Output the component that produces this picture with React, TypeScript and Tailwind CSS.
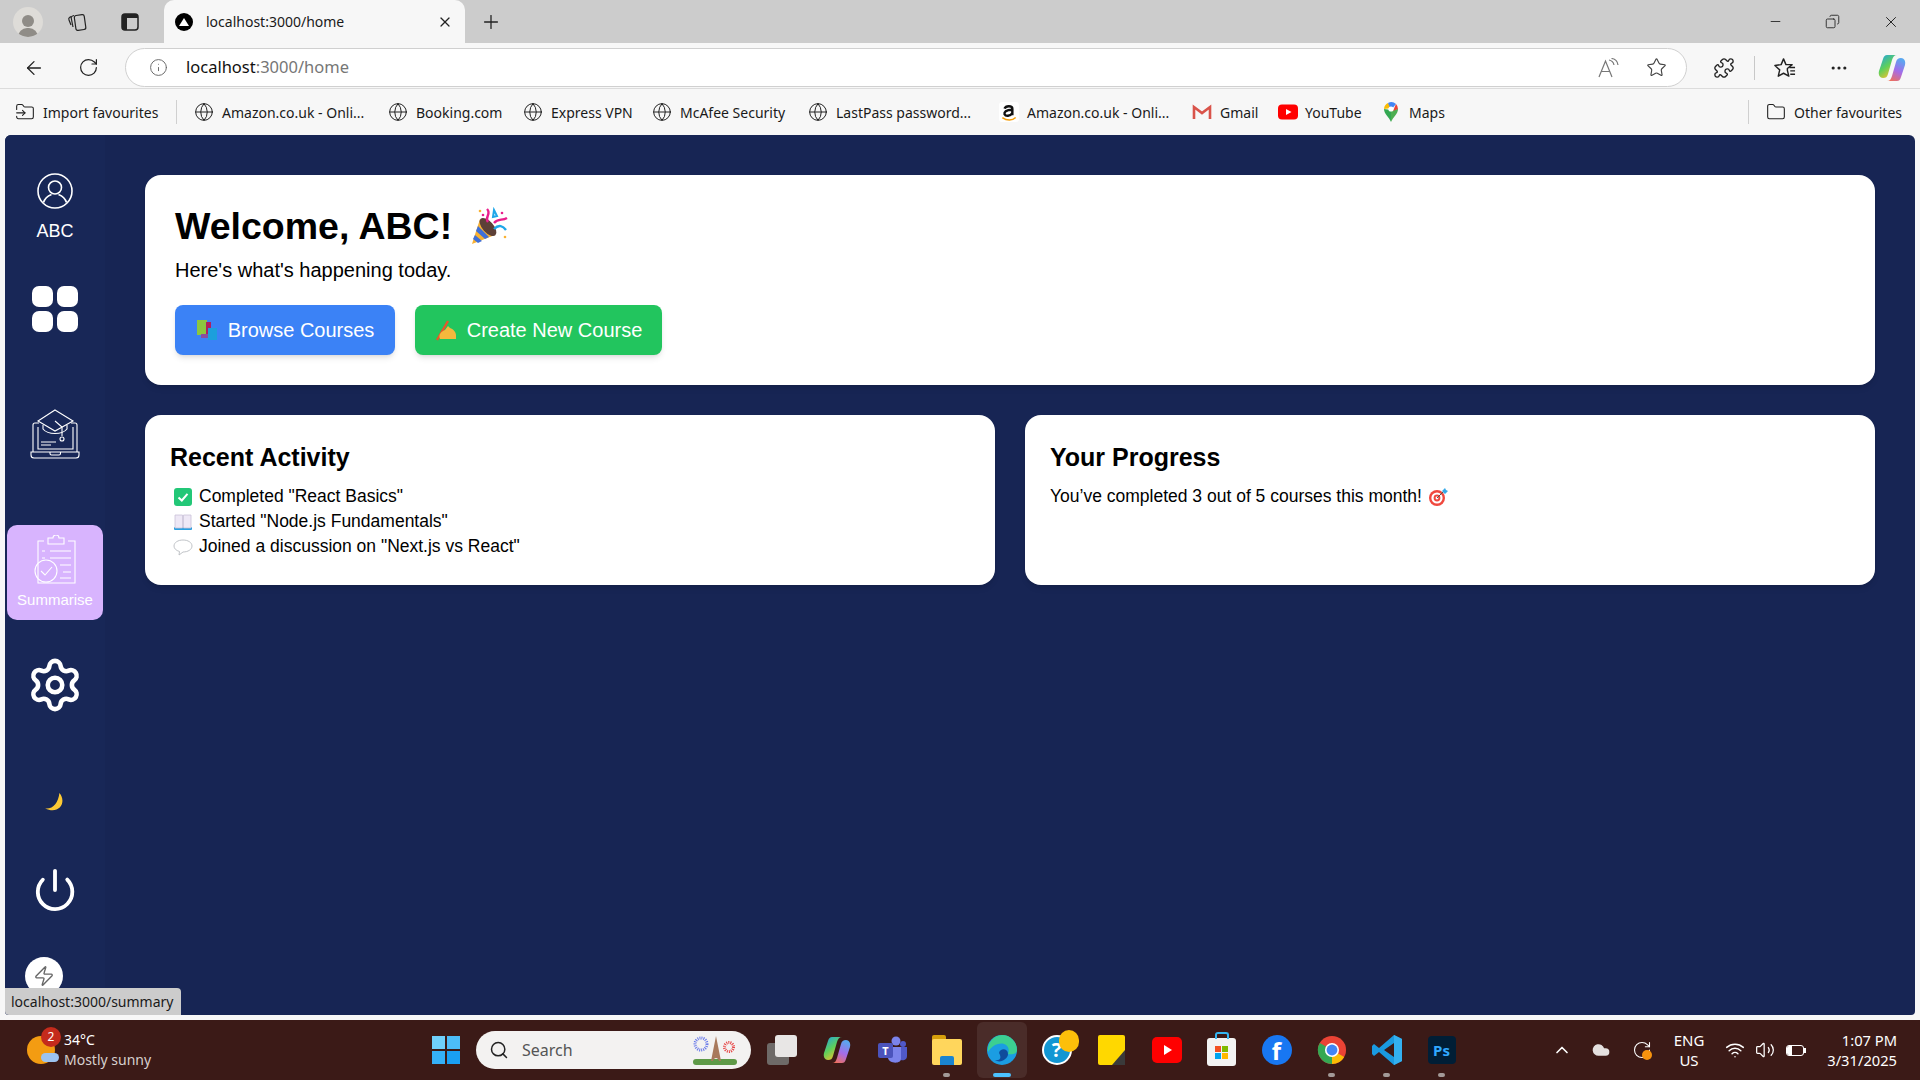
import {
  ArrowLeft,
  ChevronUp,
  Cloud,
  Copy,
  Ellipsis,
  Folder,
  FolderInput,
  Globe,
  Info,
  Minus,
  Plus,
  Power,
  Puzzle,
  RotateCw,
  Search,
  Settings,
  Star,
  Volume2,
  Wifi,
  X,
  Zap,
} from "lucide-react";

const UI_FONT = "font-['Noto_Sans','Open_Sans',sans-serif]";
const PAGE_FONT = "font-['Liberation_Sans',Arial,sans-serif]";

function PartyPopper() {
  return (
    <svg viewBox="0 0 40 40" className="w-[40px] h-[40px]">
      <path d="M3 38 L11 13 L26 29 Z" fill="#f9b233" />
      <path d="M6 29 L13 35 L9 37 L4 33 Z M9 20 L20 31 L16 33 L7 25 Z" fill="#3f6fd8" />
      <ellipse cx="19" cy="21" rx="5.5" ry="11" transform="rotate(-42 19 21)" fill="#5d4037" />
      <path d="M18 3 C23 8 15 11 19 16" stroke="#e91e8c" strokeWidth="2.4" fill="none" />
      <path d="M25 4 l3 6 -4 1 z" stroke="#1ea7e9" strokeWidth="2" fill="none" />
      <path d="M25 17 C29 12 33 15 38 12" stroke="#e91e8c" strokeWidth="2.4" fill="none" />
      <path d="M25 23 C30 18 34 20 37 24" stroke="#1ea7e9" strokeWidth="2.4" fill="none" />
      <circle cx="11" cy="5" r="1.3" fill="#f9b233" />
      <circle cx="14" cy="9" r="1.3" fill="#e91e8c" />
      <circle cx="33" cy="7" r="1.3" fill="#e91e8c" />
      <circle cx="36" cy="31" r="1.3" fill="#f9b233" />
    </svg>
  );
}

function Books() {
  return (
    <svg viewBox="0 0 22 22" className="w-[22px] h-[22px]">
      <rect x="1" y="1" width="10" height="15" fill="#8cc63f" />
      <rect x="10" y="3" width="5" height="14" fill="#b01f5e" />
      <rect x="5" y="15" width="9" height="4" fill="#8a4d9e" />
      <rect x="12" y="9" width="9" height="12" fill="#1c9fdc" />
    </svg>
  );
}

function WritingHand() {
  return (
    <svg viewBox="0 0 22 22" className="w-[22px] h-[22px]">
      <path d="M2 21 L13 2" stroke="#e8562a" strokeWidth="2.4" />
      <path d="M5 20 C3 15 7 12 10 11 L13 7 L15 9 C18 10 21 13 21 16 V20 Z" fill="#f5b83d" />
    </svg>
  );
}

function CheckEmoji() {
  return (
    <svg viewBox="0 0 20 20" className="w-[20px] h-[20px]">
      <rect x="1" y="1" width="18" height="18" rx="3" fill="#22c777" />
      <path d="M5.5 10.5 L8.8 13.5 L14.5 6.8" stroke="#fff" strokeWidth="2" fill="none" />
    </svg>
  );
}

function BookEmoji() {
  return (
    <svg viewBox="0 0 20 20" className="w-[20px] h-[20px]">
      <rect x="1" y="15" width="18" height="3" rx="1" fill="#2a9fe0" />
      <path d="M2 3 H9.5 V16 H2 Z M10.5 3 H18 V16 H10.5 Z" fill="#eee8f6" stroke="#c9c2d8" strokeWidth="0.8" />
    </svg>
  );
}

function BubbleEmoji() {
  return (
    <svg viewBox="0 0 20 20" className="w-[20px] h-[20px]">
      <path d="M10 3 C15 3 19 5.5 19 9 C19 12.5 15 15 10 15 L6 18 L6.5 14.5 C3 13.5 1 11.5 1 9 C1 5.5 5 3 10 3 Z" fill="#fff" stroke="#b9bcc1" strokeWidth="0.9" />
    </svg>
  );
}

function TargetEmoji() {
  return (
    <svg viewBox="0 0 20 20" className="w-[20px] h-[20px]">
      <circle cx="9" cy="11" r="8" fill="#f0483e" />
      <circle cx="9" cy="11" r="5.6" fill="#fff" />
      <circle cx="9" cy="11" r="3.4" fill="#f0483e" />
      <circle cx="9" cy="11" r="1.4" fill="#fff" />
      <path d="M9 11 L16 4" stroke="#555" strokeWidth="1" />
      <path d="M14 4 L17 1 L18 3 L20 4 L17 7 Z" fill="#35a9e8" />
    </svg>
  );
}

function GridIcon() {
  return (
    <div className="grid grid-cols-2 gap-[4px] w-[46px] h-[46px]">
      <div className="bg-white rounded-[7px]" />
      <div className="bg-white rounded-[7px]" />
      <div className="bg-white rounded-[7px]" />
      <div className="bg-white rounded-[7px]" />
    </div>
  );
}

function UserCircle() {
  return (
    <svg viewBox="0 0 36 36" className="w-[36px] h-[36px]" fill="none" stroke="#fff" strokeWidth="1.6">
      <circle cx="18" cy="18" r="17" />
      <circle cx="18" cy="14.5" r="6.5" />
      <path d="M6.5 29.5 C8 24.5 12 22.5 14.5 21.5 M29.5 29.5 C28 24.5 24 22.5 21.5 21.5" />
    </svg>
  );
}

function LaptopCap() {
  return (
    <svg viewBox="0 0 50 50" className="w-[50px] h-[50px]" fill="none" stroke="#fff" strokeWidth="1.1">
      <path d="M9 14 H5 a2 2 0 0 0 -2 2 V43 M41 14 H45 a2 2 0 0 1 2 2 V43" />
      <path d="M8 18 V40 H43 V18" />
      <path d="M1 43 H49 V46 a3 3 0 0 1 -3 3 H4 a3 3 0 0 1 -3 -3 Z M20 43 v1.5 a1.5 1.5 0 0 0 1.5 1.5 H29 a1.5 1.5 0 0 0 1.5 -1.5 V43" />
      <path d="M25 1 L43 12 L25 22 L8 12 Z" />
      <path d="M13 16 V20 C18 26 32 26 37 20 V16" />
      <path d="M25 12 L32 18 V27" />
      <circle cx="32" cy="30" r="2" />
      <path d="M11 33 H26 M11 36 H21" />
    </svg>
  );
}

function ClipboardCheck() {
  return (
    <svg viewBox="0 0 46 50" className="w-[46px] h-[50px]" fill="none" stroke="#fff" strokeWidth="1.1">
      <path d="M12 6 H6 V48 H43 V6 H36" />
      <path d="M16 6 V3 H21 a3 3 0 0 1 6 0 H32 V9 H16 Z" />
      <path d="M10 16 H13 M18 16 H39 M10 23 H13 M18 23 H39 M28 30 H39 M31 37 H39 M28 43 H39" />
      <circle cx="14" cy="36" r="11" />
      <path d="M9 36 L13 40 L20 32" />
    </svg>
  );
}

function Moon() {
  return (
    <svg viewBox="0 0 20 20" className="w-[22px] h-[22px]">
      <path d="M14 1 C21 9 14 21 1 15 C8 16 13 10 14 1 Z" fill="#fcc934" />
    </svg>
  );
}

function Sidebar() {
  return (
    <aside className="w-[100px] shrink-0 flex flex-col items-center pt-[38px] bg-[#182757]">
      <UserCircle />
      <span className="mt-[12px] text-[18px] leading-[21px] text-white">ABC</span>
      <div className="mt-[44px]">
        <GridIcon />
      </div>
      <div className="mt-[77px]">
        <LaptopCap />
      </div>
      <div className="mt-[66px] w-[96px] h-[95px] rounded-[10px] bg-[#d8b4fe] flex flex-col items-center pt-[10px]">
        <ClipboardCheck />
        <span className="mt-[6px] text-[15px] leading-[18px] text-white">Summarise</span>
      </div>
      <Settings size={58} strokeWidth={1.9} className="mt-[36px] text-white" />
      <div className="mt-[78px]">
        <Moon />
      </div>
      <Power size={46} strokeWidth={2} className="mt-[53px] text-white" />
    </aside>
  );
}

function Card({ title, children }: { title: string; children: React.ReactNode }) {
  return (
    <section className="h-[170px] bg-white rounded-2xl pt-[27px] px-[25px] shadow-md">
      <h2 className="text-[25px] leading-[30px] font-bold text-black">{title}</h2>
      <div className="mt-[12px]">{children}</div>
    </section>
  );
}

function ActivityRow({ icon, text }: { icon: React.ReactNode; text: string }) {
  return (
    <li className="flex items-center h-[25px] text-[17.5px] text-black">
      <span className="w-[29px] pl-[3px] shrink-0">{icon}</span>
      {text}
    </li>
  );
}

function Dashboard() {
  return (
    <main className={`flex-1 pt-[40px] pl-[40px] pr-[40px] ${PAGE_FONT}`}>
      <section className="h-[210px] bg-white rounded-2xl pt-[30px] px-[30px] shadow-md">
        <h1 className="flex items-center h-[42px] text-[37.5px] font-bold text-black">
          Welcome, ABC!
          <span className="ml-[17px]">
            <PartyPopper />
          </span>
        </h1>
        <p className="mt-[9px] text-xl leading-[28px] text-black">Here's what's happening today.</p>
        <div className="mt-[21px] flex gap-[20px]">
          <button className="w-[220px] h-[50px] rounded-lg bg-[#3b82f6] text-white text-xl flex items-center justify-center gap-[10px] shadow-md">
            <Books />
            Browse Courses
          </button>
          <button className="w-[247px] h-[50px] rounded-lg bg-[#22c55e] text-white text-xl flex items-center justify-center gap-[10px] shadow-md">
            <WritingHand />
            Create New Course
          </button>
        </div>
      </section>
      <div className="mt-[30px] grid grid-cols-2 gap-[30px]">
        <Card title="Recent Activity">
          <ul>
            <ActivityRow icon={<CheckEmoji />} text={'Completed "React Basics"'} />
            <ActivityRow icon={<BookEmoji />} text={'Started "Node.js Fundamentals"'} />
            <ActivityRow icon={<BubbleEmoji />} text={'Joined a discussion on "Next.js vs React"'} />
          </ul>
        </Card>
        <Card title="Your Progress">
          <p className="flex items-center h-[25px] text-[17.5px] text-black">
            You’ve completed 3 out of 5 courses this month!
            <span className="ml-[6px]">
              <TargetEmoji />
            </span>
          </p>
        </Card>
      </div>
    </main>
  );
}

const BOOKMARKS = [
  { label: "Amazon.co.uk - Onli...", w: "w-[194px]" },
  { label: "Booking.com", w: "w-[135px]" },
  { label: "Express VPN", w: "w-[129px]" },
  { label: "McAfee Security", w: "w-[156px]" },
  { label: "LastPass password...", w: "w-[191px]" },
];

function BrandIcon({ kind }: { kind: "amazon" | "gmail" | "youtube" | "maps" }) {
  if (kind === "amazon")
    return (
      <svg viewBox="0 0 18 18" className="w-[20px] h-[20px]">
        <rect width="18" height="18" rx="3" fill="#fff" />
        <path d="M5 6 C6 3 12 3 12 6 V12 M12 7 C6 7 4.5 9 5 11 C6 13 10 13 12 10" stroke="#111" strokeWidth="2.2" fill="none" />
        <path d="M3 14 C7 17 12 17 15 14" stroke="#f59e0b" strokeWidth="1.4" fill="none" />
      </svg>
    );
  if (kind === "gmail")
    return (
      <svg viewBox="0 0 20 18" className="w-[20px] h-[18px]">
        <path d="M2 16 V4 L10 10 L18 4 V16" stroke="#d9534a" strokeWidth="2.6" fill="none" />
      </svg>
    );
  if (kind === "youtube")
    return (
      <svg viewBox="0 0 20 16" className="w-[20px] h-[16px]">
        <rect width="20" height="15" y="0.5" rx="4" fill="#f00" />
        <path d="M8 5 L13.5 8 L8 11 Z" fill="#fff" />
      </svg>
    );
  return (
    <svg viewBox="0 0 16 20" className="w-[16px] h-[20px]">
      <path d="M8 20 C6 15 1 12 1 7 L8 8 Z" fill="#34a853" />
      <path d="M8 20 C10 15 15 12 15 7 L8 8 Z" fill="#4cae50" />
      <path d="M1 7 A7 7 0 0 1 5 1 L9 6 Z" fill="#fbbc04" />
      <path d="M5 1 A7 7 0 0 1 13 2 L8 8 Z" fill="#4285f4" />
      <path d="M13 2 A7 7 0 0 1 15 7 L10 9 Z" fill="#ea4335" />
      <circle cx="8" cy="7" r="2.6" fill="#fff" />
    </svg>
  );
}

function Copilot({ size = 28, id }: { size?: number; id: string }) {
  return (
    <svg viewBox="0 0 28 28" width={size} height={size}>
      <defs>
        <linearGradient id={`${id}A`} x1="0" y1="0" x2="0.6" y2="1">
          <stop offset="0" stopColor="#1fa2e8" />
          <stop offset="0.55" stopColor="#5fd05a" />
          <stop offset="1" stopColor="#f5c02e" />
        </linearGradient>
        <linearGradient id={`${id}B`} x1="0.6" y1="0" x2="0.2" y2="1">
          <stop offset="0" stopColor="#5aa7f0" />
          <stop offset="0.5" stopColor="#a56be8" />
          <stop offset="1" stopColor="#f0705a" />
        </linearGradient>
      </defs>
      <path d="M9 1 H19 C16 1 15 3 14 6 L10 20 C9 23 8 24 5 24 C2 24 0 21 1 17 L5 5 C6 2 7 1 9 1 Z" fill={`url(#${id}A)`} />
      <path d="M19 27 H9 C12 27 13 25 14 22 L18 8 C19 5 20 4 23 4 C26 4 28 7 27 11 L23 23 C22 26 21 27 19 27 Z" fill={`url(#${id}B)`} />
    </svg>
  );
}

function CollectionsIcon() {
  return (
    <svg viewBox="0 0 20 20" className="w-[20px] h-[20px]" fill="none" stroke="#222" strokeWidth="1.2">
      <rect x="8" y="3" width="10" height="15" rx="2" transform="rotate(-8 13 10)" />
      <path d="M7 3.5 L5.5 4 C4.5 4.3 4 5 4.2 6 L6 15 M4 4.5 L2.5 5.5 C1.7 6 1.6 7 2 8 L4 13" />
    </svg>
  );
}

function TabActionsIcon() {
  return (
    <svg viewBox="0 0 20 20" className="w-[20px] h-[20px]">
      <rect x="2" y="2" width="16" height="16" rx="3" fill="none" stroke="#222" strokeWidth="1.5" />
      <path d="M2 5 a3 3 0 0 1 3 -3 H15 a3 3 0 0 1 3 3 V6 H7 V18 H5 a3 3 0 0 1 -3 -3 Z" fill="#222" />
    </svg>
  );
}

function ReadAloudIcon() {
  return (
    <svg viewBox="0 0 22 20" className="w-[22px] h-[20px]" fill="none" stroke="#777" strokeWidth="1.2">
      <path d="M1 19 L7.5 3 L14 19 M3.5 13.5 H11.5" />
      <path d="M11 2 C14 2.5 15.5 4.5 16 7 M13.5 0.5 C17.5 1 19.5 3.5 20 7" />
    </svg>
  );
}

function FavouritesIcon() {
  return (
    <svg viewBox="0 0 24 24" className="w-[23px] h-[23px]" fill="none" stroke="#222" strokeWidth="1.5">
      <path d="M11 3 L13.5 9 H20 L15 13 V15 L16.5 21 L11 18 L5.5 21 L7 14.5 L2 10 L8.5 9 Z" strokeLinejoin="round" />
      <path d="M17 12 H23 M18 15.5 H23 M18 19 H23" />
    </svg>
  );
}

function BrowserChrome() {
  return (
    <header className={`h-[135px] shrink-0 ${UI_FONT}`}>
      <div className="h-[43px] bg-[#cccccc] flex items-end relative">
        <div className="w-[163px] h-full flex items-center pl-[13px]">
          <div className="w-[30px] h-[30px] rounded-full bg-[#dedcd8] flex flex-col items-center justify-end overflow-hidden">
            <div className="w-[12px] h-[12px] rounded-full bg-[#8f8c87] mb-[1px]" />
            <div className="w-[20px] h-[9px] rounded-t-full bg-[#8f8c87]" />
          </div>
          <div className="ml-[24px]">
            <CollectionsIcon />
          </div>
          <div className="ml-[33px]">
            <TabActionsIcon />
          </div>
        </div>
        <div className="w-[301px] h-[43px] ml-[1px] bg-[#f7f7f7] rounded-t-[10px] flex items-center pl-[11px] pr-[12px]">
          <div className="w-[18px] h-[18px] rounded-full bg-black flex items-center justify-center">
            <div className="w-0 h-0 border-l-[5px] border-r-[5px] border-b-[8px] border-l-transparent border-r-transparent border-b-white" />
          </div>
          <span className="ml-[13px] text-[14px] text-[#1a1a1a] flex-1">localhost:3000/home</span>
          <X size={16} strokeWidth={1.8} className="text-[#222]" />
        </div>
        <div className="h-full flex items-center ml-[15px]">
          <Plus size={22} strokeWidth={1.4} className="text-[#222]" />
        </div>
        <div className="ml-auto h-full flex items-center pr-[20px] gap-[42px]">
          <Minus size={15} strokeWidth={1.4} className="text-[#222]" />
          <Copy size={15} strokeWidth={1.4} className="text-[#222] scale-x-[-1]" />
          <X size={18} strokeWidth={1.3} className="text-[#222]" />
        </div>
      </div>
      <div className="h-[45px] pt-[5px] pb-px bg-[#f7f7f7] flex items-center relative">
        <div className="w-[125px] flex items-center pl-[23px] gap-[33px]">
          <ArrowLeft size={22} strokeWidth={1.4} className="text-[#222]" />
          <RotateCw size={21} strokeWidth={1.4} className="text-[#222]" />
        </div>
        <div className="w-[1562px] h-[39px] rounded-full bg-white border border-[#d0d0d0] flex items-center pl-[23px] pr-[19px]">
          <Info size={19} strokeWidth={1.2} className="text-[#666]" />
          <span className="ml-[18px] text-[16.5px] text-[#111]">
            localhost<span className="text-[#767676]">:3000/home</span>
          </span>
          <span className="ml-auto mr-[26px]">
            <ReadAloudIcon />
          </span>
          <Star size={21} strokeWidth={1.3} className="text-[#444]" />
        </div>
        <div className="flex items-center">
          <Puzzle size={22} strokeWidth={1.5} className="ml-[26px] text-[#222]" />
          <div className="ml-[19px] w-px h-[24px] bg-[#c8c8c8]" />
          <div className="ml-[18px]">
            <FavouritesIcon />
          </div>
          <Ellipsis size={20} strokeWidth={1.8} className="ml-[33px] text-[#222]" />
          <div className="ml-[29px]">
            <Copilot id="cpTop" />
          </div>
        </div>
      </div>
      <div className="h-[47px] bg-[#f7f7f7] border-t border-[#dcdcdc] flex items-center pl-[15px] text-[14px] text-[#1a1a1a]">
        <FolderInput size={20} strokeWidth={1.3} className="text-[#222]" />
        <span className="ml-[8px] w-[133px] whitespace-nowrap">Import favourites</span>
        <div className="w-px h-[24px] bg-[#d0d0d0] mr-[17px]" />
        {BOOKMARKS.map((b) => (
          <div key={b.label} className={`flex items-center gap-[8px] ${b.w}`}>
            <Globe size={20} strokeWidth={1.2} className="text-[#222] shrink-0" />
            <span className="whitespace-nowrap">{b.label}</span>
          </div>
        ))}
        <div className="flex items-center gap-[8px] w-[193px]">
          <BrandIcon kind="amazon" />
          <span className="whitespace-nowrap">Amazon.co.uk - Onli...</span>
        </div>
        <div className="flex items-center gap-[8px] w-[86px]">
          <BrandIcon kind="gmail" />
          <span>Gmail</span>
        </div>
        <div className="flex items-center gap-[7px] w-[105px]">
          <BrandIcon kind="youtube" />
          <span>YouTube</span>
        </div>
        <div className="flex items-center gap-[10px]">
          <BrandIcon kind="maps" />
          <span>Maps</span>
        </div>
        <div className="ml-auto w-px h-[24px] bg-[#d0d0d0]" />
        <Folder size={20} strokeWidth={1.3} className="ml-[17px] text-[#222]" />
        <span className="ml-[8px] mr-[18px] whitespace-nowrap">Other favourites</span>
      </div>
    </header>
  );
}

function TaskIcon({ children, dot, active }: { children: React.ReactNode; dot?: boolean; active?: boolean }) {
  return (
    <div
      className={`relative w-[50px] h-[56px] mx-[2.5px] flex items-center justify-center rounded-md ${
        active ? "bg-[#4a2c29]" : ""
      }`}
    >
      {children}
      {dot && (
        <div
          className={`absolute bottom-[1px] h-[4px] rounded-full ${
            active ? "w-[18px] bg-[#4cc2ff]" : "w-[7px] bg-[#a39a98]"
          }`}
        />
      )}
    </div>
  );
}

function Taskbar() {
  return (
    <footer className={`h-[60px] shrink-0 bg-[#3b1a17] flex items-center relative ${UI_FONT}`}>
      <div className="w-[432px] flex items-center pl-[27px]">
        <div className="relative w-[32px] h-[32px] mt-[4px]">
          <div className="w-[28px] h-[28px] rounded-full bg-[#f39c12]" />
          <div className="absolute right-[0px] bottom-[6px] w-[18px] h-[9px] rounded-full bg-[#9cc3f0]" />
          <div className="absolute -top-[9px] left-[14px] w-[20px] h-[20px] rounded-full bg-[#c42b1c] text-white text-[12px] leading-[20px] text-center">
            2
          </div>
        </div>
        <div className="ml-[5px] text-[14px] leading-[20px]">
          <div className="text-white">34°C</div>
          <div className="text-[#d6cfcd]">Mostly sunny</div>
        </div>
      </div>
      <div className="grid grid-cols-2 gap-[2px] w-[28px] h-[28px]">
        <div className="bg-[#6fd0fb]" />
        <div className="bg-[#4cbcf7]" />
        <div className="bg-[#35b0f7]" />
        <div className="bg-[#1a9ff2]" />
      </div>
      <div className="ml-[16px] w-[275px] h-[38px] rounded-full bg-[#f3f2f1] flex items-center pl-[13px] pr-[10px]">
        <Search size={20} strokeWidth={1.8} className="text-[#222]" />
        <span className="ml-[13px] text-[16px] text-[#555]">Search</span>
        <svg viewBox="0 0 50 34" className="ml-auto w-[50px] h-[34px]">
          <rect x="2" y="26" width="44" height="6" rx="3" fill="#5f9a48" />
          <path d="M25 3 L20 28 H22 C23 24 27 24 28 28 H30 Z" fill="#a8795c" />
          <circle cx="10" cy="11" r="6" fill="none" stroke="#6a7bea" strokeWidth="3" strokeDasharray="1 1" />
          <circle cx="38" cy="14" r="4.5" fill="none" stroke="#e64545" strokeWidth="3" strokeDasharray="1 1" />
        </svg>
      </div>
      <div className="flex items-center ml-[3px]">
        <TaskIcon>
          <div className="relative w-[30px] h-[30px]">
            <div className="absolute left-0 bottom-0 w-[22px] h-[22px] rounded-[3px] bg-[#6e6a68]" />
            <div className="absolute right-0 top-0 w-[22px] h-[22px] rounded-[3px] bg-[#e8e6e5]" />
          </div>
        </TaskIcon>
        <TaskIcon>
          <Copilot size={28} id="cpBar" />
        </TaskIcon>
        <TaskIcon>
          <svg viewBox="0 0 32 32" className="w-[32px] h-[32px]">
            <circle cx="20" cy="7" r="4.5" fill="#7b83eb" />
            <circle cx="27" cy="10" r="3" fill="#5059c9" />
            <path d="M22 13 H31 V22 C31 26 27 27 25 26 Z" fill="#5059c9" />
            <path d="M10 13 H25 V25 C25 30 13 30 12 24 Z" fill="#7b83eb" />
            <rect x="2" y="9" width="15" height="15" rx="2" fill="#4b53bc" />
            <text x="9.5" y="21" fontSize="11" fontWeight="700" fill="#fff" textAnchor="middle">T</text>
          </svg>
        </TaskIcon>
        <TaskIcon dot>
          <div className="relative w-[30px] h-[30px]">
            <div className="absolute top-0 left-0 w-[14px] h-[8px] rounded-t-[2px] bg-[#d69e0b]" />
            <div className="absolute top-[4px] left-0 w-[30px] h-[26px] rounded-[2px] bg-[#ffd65c]" />
            <div className="absolute bottom-0 left-[8px] w-[14px] h-[9px] rounded-t-[2px] bg-[#1a84d0]" />
          </div>
        </TaskIcon>
        <TaskIcon dot active>
          <svg viewBox="0 0 32 32" className="w-[32px] h-[32px]">
            <circle cx="16" cy="16" r="15" fill="#1b9de2" />
            <path d="M16 1 A15 15 0 0 1 31 16 C31 20 26 21 22 20 C25 12 18 8 12 10 C8 11 4 14 2 18 A15 15 0 0 1 16 1 Z" fill="#3ccf91" />
            <path d="M13 19 C14 14 22 14 22 20 C22 25 14 30 9 26 C14 27 16 24 13 19 Z" fill="#0f4c9c" />
          </svg>
        </TaskIcon>
        <TaskIcon>
          <div className="relative w-[30px] h-[30px] rounded-full bg-[#1296d3] border-2 border-white text-white text-[20px] font-bold leading-[26px] text-center">
            ?
            <div className="absolute -top-[7px] -right-[9px] w-[20px] h-[22px] rounded-full bg-[#fdbf0a]" />
          </div>
        </TaskIcon>
        <TaskIcon>
          <div className="relative w-[27px] h-[30px] rounded-[2px] bg-[#ffd800]">
            <svg viewBox="0 0 13 15" className="absolute bottom-0 right-0 w-[13px] h-[15px]">
              <path d="M13 0 V15 H0 Z" fill="#3a3a3a" />
            </svg>
          </div>
        </TaskIcon>
        <TaskIcon>
          <svg viewBox="0 0 30 26" className="w-[30px] h-[26px]">
            <rect width="30" height="26" rx="5" fill="#f00" />
            <path d="M12 8 L20 13 L12 18 Z" fill="#fff" />
          </svg>
        </TaskIcon>
        <TaskIcon>
          <div className="relative w-[29px] h-[28px] mt-[4px] rounded-[3px] bg-[#f3f3f3] flex items-center justify-center">
            <div className="absolute -top-[6px] w-[14px] h-[7px] rounded-t-[3px] border-2 border-b-0 border-[#35b6f2]" />
            <div className="grid grid-cols-2 gap-[1px]">
              <div className="w-[6px] h-[6px] bg-[#f25022]" />
              <div className="w-[6px] h-[6px] bg-[#7fba00]" />
              <div className="w-[6px] h-[6px] bg-[#00a4ef]" />
              <div className="w-[6px] h-[6px] bg-[#ffb900]" />
            </div>
          </div>
        </TaskIcon>
        <TaskIcon>
          <div className="w-[30px] h-[30px] rounded-full bg-[#1877f2] text-white text-[24px] font-bold leading-[32px] text-center">
            f
          </div>
        </TaskIcon>
        <TaskIcon dot>
          <svg viewBox="0 0 32 32" className="w-[30px] h-[30px]">
            <circle cx="16" cy="16" r="15" fill="#ea4335" />
            <path d="M16 16 L29 23.5 A15 15 0 0 1 16 31 Z" fill="#fbbc04" />
            <path d="M16 16 L16 31 A15 15 0 0 1 3 8.5 Z" fill="#34a853" />
            <circle cx="16" cy="16" r="7.5" fill="#fff" />
            <circle cx="16" cy="16" r="5.8" fill="#4285f4" />
          </svg>
        </TaskIcon>
        <TaskIcon dot>
          <svg viewBox="0 0 30 32" className="w-[30px] h-[32px]">
            <path d="M22 1 L30 5 V27 L22 31 L7 18 L2 22 L0 20 V12 L2 10 L7 14 Z M22 9 L12 16 L22 23 Z" fill="#1a9ae0" />
            <path d="M22 1 L30 5 V27 L22 31 Z" fill="#33b0f0" />
          </svg>
        </TaskIcon>
        <TaskIcon dot>
          <div className="w-[28px] h-[28px] rounded-[4px] bg-[#001e36] text-[#31a8ff] text-[15px] font-bold leading-[28px] text-center">
            Ps
          </div>
        </TaskIcon>
      </div>
      <div className="ml-[83px] flex items-center text-white">
        <ChevronUp size={20} strokeWidth={2} />
        <Cloud size={20} fill="#e4e0df" strokeWidth={0} className="ml-[19px]" />
        <div className="relative ml-[21px] w-[20px] h-[20px]">
          <RotateCw size={20} strokeWidth={1.3} />
          <div className="absolute right-0 bottom-0 w-[10px] h-[10px] rounded-full bg-[#f7930e]" />
        </div>
        <div className="ml-[21px] w-[32px] text-center text-[15px] leading-[20px]">
          ENG
          <br />
          US
        </div>
        <Wifi size={20} strokeWidth={1.8} className="ml-[20px]" />
        <Volume2 size={20} strokeWidth={1.5} className="ml-[10px]" />
        <div className="ml-[11px] relative w-[18px] h-[11px] rounded-[3px] border border-white">
          <div className="w-[5px] h-full bg-white rounded-l-[2px]" />
        </div>
        <div className="w-[2px] h-[5px] bg-white" />
      </div>
      <div className="ml-auto mr-[23px] text-right text-[14.7px] leading-[20px] text-white">
        <div>1:07 PM</div>
        <div>3/31/2025</div>
      </div>
    </footer>
  );
}

export default function App() {
  return (
    <div className="w-screen h-screen overflow-hidden flex flex-col bg-[#f7f7f7] relative">
      <BrowserChrome />
      <div className="h-[885px] shrink-0 px-[5px] pb-[5px]">
        <div className={`relative h-full flex rounded-t-[6px] rounded-b-[4px] overflow-hidden bg-[#172554] ${PAGE_FONT}`}>
          <Sidebar />
          <Dashboard />
          <div className="absolute left-[20px] top-[822px] w-[38px] h-[38px] rounded-full bg-white flex items-center justify-center">
            <Zap size={22} strokeWidth={1.5} className="text-[#666]" />
          </div>
        </div>
      </div>
      <div className={`absolute left-[5px] top-[988px] h-[27px] w-[176px] rounded-tr-[4px] rounded-bl-[4px] bg-[#cccccc] pl-[6px] text-[14px] leading-[27px] text-[#1a1a1a] ${UI_FONT}`}>
        localhost:3000/summary
      </div>
      <Taskbar />
    </div>
  );
}
